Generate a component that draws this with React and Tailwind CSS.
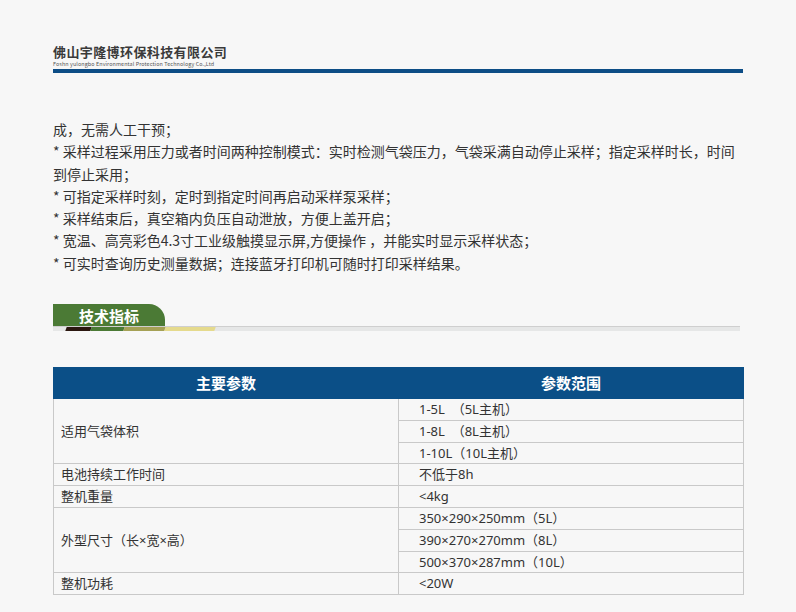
import React from "react";

const font = { fontFamily: '"Noto Sans CJK SC", "Noto Sans", sans-serif' };
const tableFont = { fontFamily: '"Noto Sans", "Noto Sans CJK SC", sans-serif' };

const features = [
  "成，无需人工干预；",
  ["* 采样过程采用压力或者时间两种控制模式：实时检测气袋压力，气袋采满自动停止采样；指定采样时长，时间", "到停止采用；"],
  "* 可指定采样时刻，定时到指定时间再启动采样泵采样；",
  "* 采样结束后，真空箱内负压自动泄放，方便上盖开启；",
  "* 宽温、高亮彩色4.3寸工业级触摸显示屏,方便操作 ，并能实时显示采样状态；",
  "* 可实时查询历史测量数据；连接蓝牙打印机可随时打印采样结果。",
];

const rows = [
  { name: "适用气袋体积", values: ["1-5L  （5L主机）", "1-8L  （8L主机）", "1-10L（10L主机）"] },
  { name: "电池持续工作时间", values: ["不低于8h"] },
  { name: "整机重量", values: ["<4kg"] },
  { name: "外型尺寸（长×宽×高）", values: ["350×290×250mm（5L）", "390×270×270mm（8L）", "500×370×287mm（10L）"] },
  { name: "整机功耗", values: ["<20W"] },
];

function App() {
  return (
    <div className="w-[796px] h-[612px] overflow-hidden bg-[#f7f7f7] text-[#333]" style={font}>
      {/* company header */}
      <div className="pt-[45px] pl-[53px] pr-[53px]">
        <div className="text-[13px] leading-[14px] font-bold tracking-[0.4px] text-[#3a3a3a]">
          佛山宇隆博环保科技有限公司
        </div>
        <div className="text-[5.4px] leading-[6px] mt-[2px] text-[#555] tracking-[0.1px] whitespace-nowrap">
          Foshn yulongbo Environmental Protection Technology Co.,Ltd
        </div>
        <div className="h-[4px] bg-[#0d4d86] mt-[2px]"></div>
      </div>

      {/* features */}
      <div className="pl-[53px] pt-[45px] text-[14px] leading-[22.3px] text-[#333] whitespace-nowrap">
        {features.map((f, i) =>
          Array.isArray(f) ? (
            <div key={i}>
              {f[0]}
              <br />
              {f[1]}
            </div>
          ) : (
            <div key={i}>{f}</div>
          )
        )}
      </div>

      {/* section title */}
      <div className="pl-[53px] pr-[56px] mt-[30px]">
        <div className="w-[112px] h-[22px] bg-[#4b7a35] rounded-tr-[16px] flex items-center pl-[26px] text-white font-bold text-[15px] leading-none">
          技术指标
        </div>
        <div className="relative h-[5px] bg-[#e6e7e7] border-t border-[#cfcfcf]">
          <div className="absolute left-[13px] top-0 h-[4px] w-[25px] bg-[#2b1710] -skew-x-[20deg]"></div>
          <div className="absolute left-[38px] top-0 h-[4px] w-[33px] bg-[#4b7a35] -skew-x-[20deg]"></div>
          <div className="absolute left-[71px] top-0 h-[4px] w-[41px] bg-[#a5a155] -skew-x-[20deg]"></div>
          <div className="absolute left-[112px] top-0 h-[4px] w-[50px] bg-[#e5da8d] -skew-x-[20deg]"></div>
        </div>
      </div>

      {/* table */}
      <div className="pl-[53px] pr-[52px] mt-[36px]">
        <table className="w-full border-collapse text-[13px] text-[#333]" style={tableFont}>
          <thead>
            <tr className="bg-[#0b4f87] text-white" style={font}>
              <th className="w-[345px] h-[31px] text-[15px] font-bold text-center border border-[#0b4f87]">主要参数</th>
              <th className="h-[31px] text-[15px] font-bold text-center border border-[#0b4f87]">参数范围</th>
            </tr>
          </thead>
          <tbody>
            {rows.map((r) =>
              r.values.map((v, j) => (
                <tr key={r.name + j}>
                  {j === 0 && (
                    <td
                      rowSpan={r.values.length}
                      className="border border-[#c9c9c9] pl-[7px] text-left align-middle leading-none"
                    >
                      {r.name}
                    </td>
                  )}
                  <td className="h-[21.8px] border border-[#c9c9c9] pl-[20px] text-left leading-none whitespace-pre">
                    {v}
                  </td>
                </tr>
              ))
            )}
          </tbody>
        </table>
      </div>
    </div>
  );
}

export default App;
